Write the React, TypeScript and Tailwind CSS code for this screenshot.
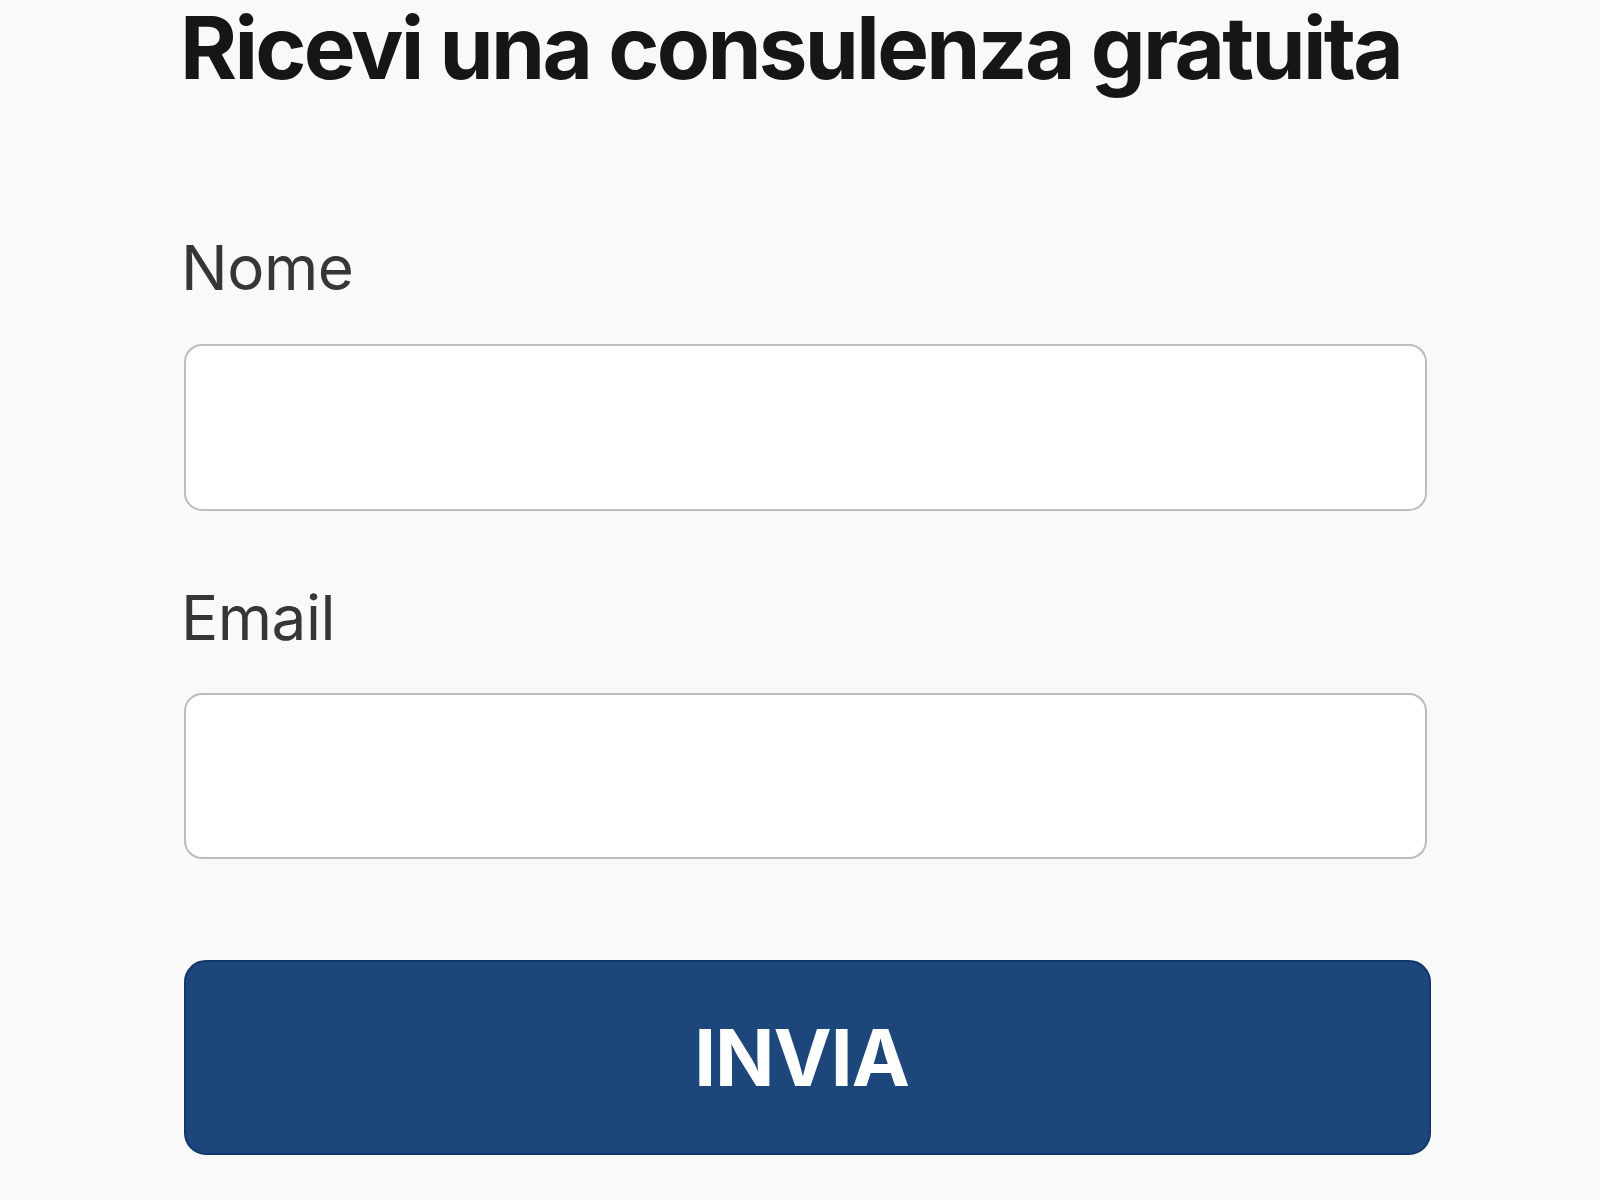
import React from "react";

export default function App() {
  return (
    <div className="min-h-[1200px] w-full bg-[#f9f9f9]" style={{ fontFamily: "Inter, 'Noto Sans', sans-serif" }}>
      <div className="ml-[184px] w-[1246px] flex flex-col">
        <h1 className="-ml-[4px] text-[87px] leading-[96px] font-bold text-[#161616] tracking-[-2.7px] whitespace-nowrap">
          Ricevi una consulenza gratuita
        </h1>
        <label className="-ml-[3px] mt-[136px] text-[62px] leading-[72px] text-[#363636] tracking-[-0.5px]">Nome</label>
        <input
          type="text"
          className="mt-[40px] h-[167px] w-[1243px] rounded-[18px] border-2 border-[#bdbdbd] bg-white outline-none"
        />
        <label className="-ml-[3px] mt-[71px] text-[62px] leading-[72px] text-[#363636] tracking-[-0.5px]">Email</label>
        <input
          type="email"
          className="mt-[39px] h-[166px] w-[1243px] rounded-[18px] border-2 border-[#bdbdbd] bg-white outline-none"
        />
        <button className="mt-[101px] h-[195px] w-[1247px] rounded-[22px] border-2 border-[#12376b] bg-[#1d467a] pr-[12px] text-white text-[78px] font-bold tracking-[-1px] flex items-center justify-center">
          INVIA
        </button>
      </div>
    </div>
  );
}
